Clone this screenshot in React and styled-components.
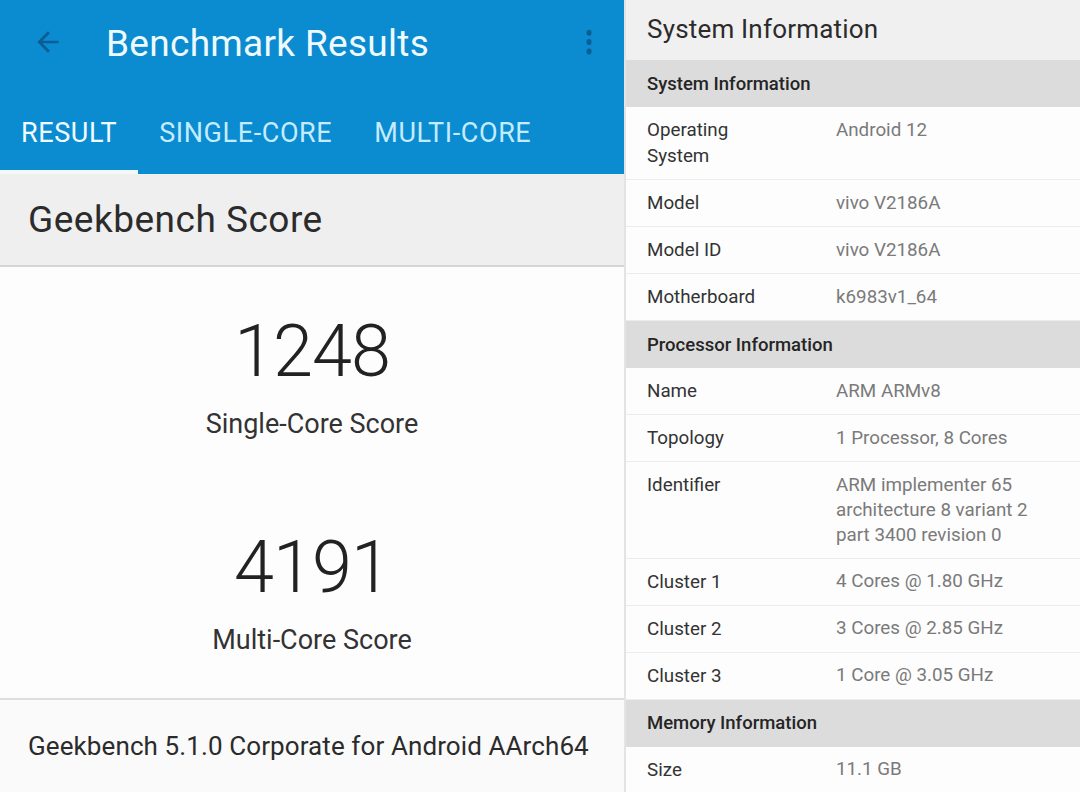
import styled, { createGlobalStyle } from 'styled-components';

const GlobalStyle = createGlobalStyle`
  html, body {
    margin: 0;
    padding: 0;
    background: #ffffff;
  }
  body {
    font-family: Roboto, "Noto Sans", "Liberation Sans", sans-serif;
  }
`;

const sections = [
  {
    title: 'System Information',
    rows: [
      ['Operating System', 'Android 12', true],
      ['Model', 'vivo V2186A'],
      ['Model ID', 'vivo V2186A'],
      ['Motherboard', 'k6983v1_64'],
    ],
  },
  {
    title: 'Processor Information',
    rows: [
      ['Name', 'ARM ARMv8'],
      ['Topology', '1 Processor, 8 Cores'],
      ['Identifier', 'ARM implementer 65 architecture 8 variant 2 part 3400 revision 0'],
      ['Cluster 1', '4 Cores @ 1.80 GHz'],
      ['Cluster 2', '3 Cores @ 2.85 GHz'],
      ['Cluster 3', '1 Core @ 3.05 GHz'],
    ],
  },
  {
    title: 'Memory Information',
    rows: [['Size', '11.1 GB']],
  },
];

const BackIcon = () => (
  <svg width="32" height="32" viewBox="0 0 24 24">
    <path fill="currentColor" d="M20 11H7.83l5.59-5.59L12 4l-8 8 8 8 1.41-1.41L7.83 13H20v-2z" />
  </svg>
);

const MoreIcon = () => (
  <svg width="30" height="30" viewBox="0 0 24 24">
    <ellipse cx="12" cy="4.5" rx="2" ry="2.4" fill="currentColor" />
    <ellipse cx="12" cy="12" rx="2" ry="2.4" fill="currentColor" />
    <ellipse cx="12" cy="19.5" rx="2" ry="2.4" fill="currentColor" />
  </svg>
);

const App = () => {
  return (
    <>
      <GlobalStyle />
      <Screen>
        <LeftPanel>
          <Header>
            <TitleBar>
              <IconButton><BackIcon /></IconButton>
              <Title>Benchmark Results</Title>
              <Overflow><MoreIcon /></Overflow>
            </TitleBar>
            <Tabs>
              <Tab active>RESULT</Tab>
              <Tab>SINGLE-CORE</Tab>
              <Tab>MULTI-CORE</Tab>
            </Tabs>
          </Header>

          <ScoreTitle>Geekbench Score</ScoreTitle>

          <ScoreBody>
            <ScoreBlock>
              <ScoreNumber>1248</ScoreNumber>
              <ScoreLabel>Single-Core Score</ScoreLabel>
            </ScoreBlock>
            <ScoreBlock>
              <ScoreNumber>4191</ScoreNumber>
              <ScoreLabel>Multi-Core Score</ScoreLabel>
            </ScoreBlock>
          </ScoreBody>

          <Footer>Geekbench 5.1.0 Corporate for Android AArch64</Footer>
        </LeftPanel>

        <RightPanel>
          <PageTitle>System Information</PageTitle>
          {sections.map((section) => (
            <Section key={section.title}>
              <SectionHeader>{section.title}</SectionHeader>
              {section.rows.map(([label, value, wrap]) => (
                <InfoRow key={label}>
                  <InfoLabel narrow={wrap}>{label}</InfoLabel>
                  <InfoValue>{value}</InfoValue>
                </InfoRow>
              ))}
            </Section>
          ))}
        </RightPanel>
      </Screen>
    </>
  );
};

export default App;

const Screen = styled.div`
  display: flex;
  width: 1080px;
  height: 792px;
  overflow: hidden;
`;

const LeftPanel = styled.div`
  display: flex;
  flex-direction: column;
  width: 624px;
  flex-shrink: 0;
  background: #fdfdfd;
  border-right: 2px solid #e4e4e4;
`;

const Header = styled.div`
  display: flex;
  flex-direction: column;
  flex-shrink: 0;
  height: 174px;
  background: #0b8bd0;
`;

const TitleBar = styled.div`
  display: flex;
  align-items: center;
  height: 88px;
  padding: 0 20px 0 32px;
`;

const IconButton = styled.div`
  display: flex;
  color: #0a5d95;
  width: 74px;
  margin-top: -4px;
`;

const Title = styled.div`
  flex: 1;
  color: #eefaff;
  font-size: 37px;
  letter-spacing: 0.3px;
  margin-top: -2px;
`;

const Overflow = styled.div`
  display: flex;
  color: #0a5d95;
  margin-top: -4px;
`;

const Tabs = styled.div`
  display: flex;
  flex: 1;
`;

const Tab = styled.div`
  display: flex;
  align-items: center;
  padding: 8px 21px 0;
  font-size: 27px;
  letter-spacing: 0.6px;
  color: ${({ active }) => (active ? '#f2fbff' : '#c4ecff')};
  border-bottom: 4px solid ${({ active }) => (active ? '#f4f8fa' : 'transparent')};
`;

const ScoreTitle = styled.div`
  display: flex;
  align-items: center;
  flex-shrink: 0;
  height: 91px;
  padding-left: 28px;
  background: #efefef;
  border-bottom: 2px solid #d6d6d6;
  color: #2b2b2b;
  font-size: 37px;
  letter-spacing: 0.5px;
`;

const ScoreBody = styled.div`
  display: flex;
  flex-direction: column;
  align-items: center;
  flex-shrink: 0;
  gap: 89px;
  height: 433px;
  padding-top: 45px;
  box-sizing: border-box;
  border-bottom: 2px solid #dedede;
`;

const ScoreBlock = styled.div`
  display: flex;
  flex-direction: column;
  align-items: center;
  gap: 17px;
`;

const ScoreNumber = styled.div`
  font-size: 72px;
  font-weight: 300;
  line-height: 80px;
  color: #222222;
  letter-spacing: -1px;
`;

const ScoreLabel = styled.div`
  font-size: 27px;
  line-height: 30px;
  color: #333333;
`;

const Footer = styled.div`
  display: flex;
  align-items: center;
  flex: 1;
  padding-left: 28px;
  background: #fafafa;
  color: #2b2b2b;
  font-size: 26px;
  letter-spacing: 0.1px;
`;

const RightPanel = styled.div`
  display: flex;
  flex-direction: column;
  flex: 1;
  background: #fdfdfd;
`;

const PageTitle = styled.div`
  display: flex;
  align-items: center;
  flex-shrink: 0;
  height: 57px;
  padding: 0 0 3px 21px;
  background: #f0f0f0;
  color: #2b2b2b;
  font-size: 26px;
  letter-spacing: 0.2px;
`;

const Section = styled.div`
  display: flex;
  flex-direction: column;
  flex-shrink: 0;
`;

const SectionHeader = styled.div`
  display: flex;
  align-items: center;
  flex-shrink: 0;
  height: 47px;
  padding-left: 21px;
  background: #dcdcdc;
  color: #252525;
  font-size: 18.5px;
  font-weight: 500;
`;

const InfoRow = styled.div`
  display: grid;
  flex-shrink: 0;
  grid-template-columns: 189px 1fr;
  padding: 10px 40px 10px 21px;
  border-bottom: 1px solid #ececec;
  font-size: 18.8px;
  line-height: 26px;
`;

const InfoLabel = styled.div`
  color: #333333;
  max-width: ${({ narrow }) => (narrow ? '110px' : 'none')};
`;

const InfoValue = styled.div`
  color: #7a7a7a;
  line-height: 25px;
  padding-top: 0.5px;
`;
